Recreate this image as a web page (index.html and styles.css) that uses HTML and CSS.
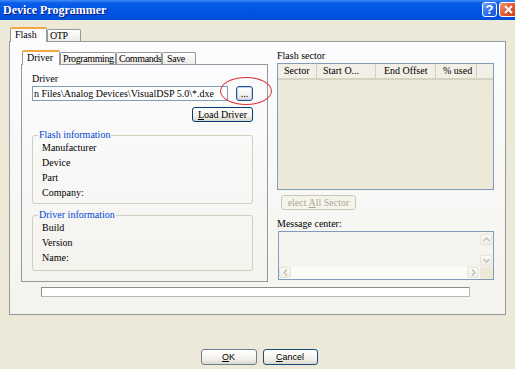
FILE: index.html
```html
<!DOCTYPE html>
<html lang="en">
<head>
    <meta charset="UTF-8">
    <title>Device Programmer</title>
    <link rel="stylesheet" href="styles.css">
</head>
<body>
    <div class="titlebar">
        <span class="title">Device Programmer</span>
        <div class="caption-buttons">
            <span class="cap-btn help">?</span>
            <span class="cap-btn close">
                <svg width="9" height="9" viewBox="0 0 9 9"><path d="M1 1 L8 8 M8 1 L1 8" stroke="#fff" stroke-width="2" fill="none"/></svg>
            </span>
        </div>
    </div>

    <div class="client">
        <!-- outer tabs -->
        <div class="tabs">
            <span class="tab active tab-flash">Flash</span>
            <span class="tab tab-otp">OTP</span>
        </div>
        <div class="tab-panel outer-panel">
            <div class="columns">
                <div class="left-col">
                    <div class="tabs">
                        <span class="tab active tab-driver">Driver</span>
                        <span class="tab tab-prog">Programming</span>
                        <span class="tab tab-cmd">Commands</span>
                        <span class="tab tab-save">Save</span>
                    </div>
                    <div class="tab-panel inner-panel">
                        <div class="field-label">Driver</div>
                        <div class="driver-row">
                            <div class="textbox">n Files\Analog Devices\VisualDSP 5.0\*.dxe</div>
                            <button class="btn browse">...</button>
                            <span class="annotation"></span>
                        </div>
                        <div class="load-row">
                            <button class="btn load"><u>L</u>oad Driver</button>
                        </div>

                        <fieldset class="group">
                            <legend>Flash information</legend>
                            <div class="item">Manufacturer</div>
                            <div class="item">Device</div>
                            <div class="item">Part</div>
                            <div class="item">Company:</div>
                        </fieldset>

                        <fieldset class="group group-driver">
                            <legend>Driver information</legend>
                            <div class="item">Build</div>
                            <div class="item">Version</div>
                            <div class="item">Name:</div>
                        </fieldset>
                    </div>
                </div>

                <div class="right-col">
                    <div class="field-label">Flash sector</div>
                    <div class="listview">
                        <div class="list-header">
                            <span class="col col-sector">Sector</span>
                            <span class="col col-start">Start O...</span>
                            <span class="col col-end">End Offset</span>
                            <span class="col col-used">% used</span>
                        </div>
                    </div>
                    <button class="btn disabled select-all">elect <u>A</u>ll Sector</button>

                    <div class="field-label msg-label">Message center:</div>
                    <div class="msgbox">
                        <div class="msg-area"></div>
                        <div class="vscroll">
                            <span class="sb-btn">
                                <svg width="7" height="5" viewBox="0 0 7 5"><path d="M0.5 4 L3.5 1 L6.5 4" stroke="#c3c0b2" stroke-width="1.4" fill="none"/></svg>
                            </span>
                            <span class="sb-btn">
                                <svg width="7" height="5" viewBox="0 0 7 5"><path d="M0.5 1 L3.5 4 L6.5 1" stroke="#c3c0b2" stroke-width="1.4" fill="none"/></svg>
                            </span>
                        </div>
                        <div class="hscroll">
                            <span class="sb-btn">
                                <svg width="5" height="7" viewBox="0 0 5 7"><path d="M4 0.5 L1 3.5 L4 6.5" stroke="#c3c0b2" stroke-width="1.4" fill="none"/></svg>
                            </span>
                            <span class="sb-btn">
                                <svg width="5" height="7" viewBox="0 0 5 7"><path d="M1 0.5 L4 3.5 L1 6.5" stroke="#c3c0b2" stroke-width="1.4" fill="none"/></svg>
                            </span>
                        </div>
                        <div class="corner"></div>
                    </div>
                </div>
            </div>

            <div class="progress"></div>
        </div>

        <div class="dialog-buttons">
            <button class="btn dlg ok"><u>O</u>K</button>
            <button class="btn dlg cancel"><u>C</u>ancel</button>
        </div>
    </div>
</body>
</html>
```

FILE: styles.css
```css
* { box-sizing: border-box; }
body { margin: 0; width: 515px; height: 369px; overflow: hidden; background-color: #ece9d8; font-family: 'Liberation Serif', serif; font-size: 10px; color: #000; }

/* title bar */
.titlebar { height: 20px; display: flex; justify-content: space-between; padding-left: 3px; background: linear-gradient(#3d8cf5 0, #0a5de8 3px, #0055e5 50%, #004fd9 100%); }
.title { color: #fff; font-weight: bold; font-size: 12px; line-height: 20px; text-shadow: 1px 1px #0a1883; }
.caption-buttons { display: flex; gap: 2px; margin-top: 2px; margin-right: -2px; }
.cap-btn { width: 15px; height: 15px; border: 1px solid #fff; border-radius: 3px; display: flex; align-items: center; justify-content: center; color: #fff; font-family: 'Liberation Sans', sans-serif; font-weight: bold; font-size: 13px; }
.help { background: linear-gradient(135deg, #6aa6ff, #2a6cf0 55%, #1a52d0); }
.close { width: 18px; background: linear-gradient(135deg, #f29a7a, #e2592f 50%, #c8401c); }

.client { padding-left: 9px; }

/* tabs */
.tabs { display: flex; align-items: flex-end; height: 15px; position: relative; z-index: 1; padding-left: 1px; }
.client > .tabs { margin-top: 7px; }
.tab { height: 12px; margin-bottom: 1px; line-height: 11px; padding-left: 2px; border: 1px solid #919b9c; border-bottom: none; border-radius: 2px 2px 0 0; background: linear-gradient(#fff, #ecebe6); white-space: nowrap; overflow: hidden; letter-spacing: -0.4px; }
.tab.active { height: 15px; margin-bottom: 0; line-height: 12px; border-top: 2px solid #f2a93b; background: #fcfcfe; padding-left: 4px; letter-spacing: 0; }
.tab-flash { width: 37px; }
.tab-otp { width: 34px; }
.tab-driver { width: 38px; }
.tab-prog { width: 56px; }
.tab-cmd { width: 46px; }
.tab-save { width: 34px; padding-left: 4px; }

.tab-panel { margin-top: -1px; border: 1px solid #919b9c; background: linear-gradient(#fcfcfe, #f4f3ee); }
.outer-panel { width: 497px; height: 274px; padding: 8px 0 0 11px; }
.columns { display: flex; gap: 9px; }
.left-col { width: 247px; }
.inner-panel { height: 218px; padding: 8px 14px 0 10px; position: relative; }
.right-col { width: 217px; }

.field-label { line-height: 12px; white-space: nowrap; }

/* driver selection */
.driver-row { display: flex; margin-top: 1px; position: relative; }
.textbox { width: 197px; height: 15px; border: 1px solid #7f9db9; background: #fff; line-height: 13px; padding-left: 1px; white-space: nowrap; overflow: hidden; }
.btn { font-family: 'Liberation Serif', serif; font-size: 10px; height: 15px; padding: 0; border: 1px solid #003c74; border-radius: 3px; background: linear-gradient(#fff, #f3f2ec 60%, #dcd8cc); color: #000; line-height: 12px; white-space: nowrap; }
.browse { width: 17px; margin-left: 8px; border-color: #2c4f86; box-shadow: inset 0 0 0 1px #b9d1f5; }
.annotation { position: absolute; left: 188px; top: -9px; width: 52px; height: 28px; border: 1px solid #e0303a; border-radius: 50%; }
.load-row { display: flex; justify-content: flex-end; margin-top: 6px; }
.load { width: 61px; }

/* group boxes */
.group { margin: 8px 0 0; padding: 0 0 3px 9px; border: 1px solid #d0d0bf; border-radius: 3px; min-width: 0; }
.group legend { margin-left: -4px; padding: 0 1px; line-height: 10px; color: #0046d5; }
.group-driver { margin-top: 6px; padding-bottom: 5px; }
.item { line-height: 15px; }

/* flash sector list */
.listview { margin-top: 1px; height: 127px; border: 1px solid #7f9db9; background: #ece9d8; }
.list-header { display: flex; height: 16px; background: #f1efe6; border-bottom: 2px solid #d6d2c2; }
.col { line-height: 13px; padding-left: 6px; border-right: 1px solid #d3cfbf; white-space: nowrap; }
.col-sector { width: 39px; }
.col-start { width: 59px; }
.col-end { width: 60px; padding-left: 8px; }
.col-used { width: 41px; padding-left: 7px; }

.select-all { display: block; width: 75px; margin: 5px 0 0 4px; }
.btn.disabled { color: #aca899; border-color: #c9c7ba; background: #f5f4ea; }
.msg-label { margin-top: 8px; }

.msgbox { margin: 1px 0 0 1px; width: 216px; height: 49px; border: 1px solid #7f9db9; background: #f4f3ee; display: grid; grid-template-columns: 1fr 13px; grid-template-rows: 1fr 12px; }
.vscroll { display: flex; flex-direction: column; justify-content: space-between; padding: 2px 0 1px; }
.hscroll { display: flex; justify-content: space-between; padding-right: 1px; background: #fbfbf8; }
.sb-btn { width: 12px; height: 11px; display: flex; align-items: center; justify-content: center; border: 1px solid #e6e4d8; border-radius: 2px; background: linear-gradient(#fbfbf7, #eeede5); }
.corner { background: #ece9d8; }

.progress { margin: 5px 0 0 20px; width: 429px; height: 10px; border: 1px solid #8c8d8d; border-bottom-color: #b9b9b4; border-right-color: #b9b9b4; background: #fff; }

/* dialog buttons */
.dialog-buttons { display: flex; justify-content: center; gap: 6px; margin: 34px 0 0 -9px; padding-left: 3px; }
.dlg { width: 56px; height: 16px; font-family: 'Liberation Sans', sans-serif; font-size: 9px; border-color: #6d7f93; }
.cancel { width: 55px; border-color: #1c4a78; }
```
